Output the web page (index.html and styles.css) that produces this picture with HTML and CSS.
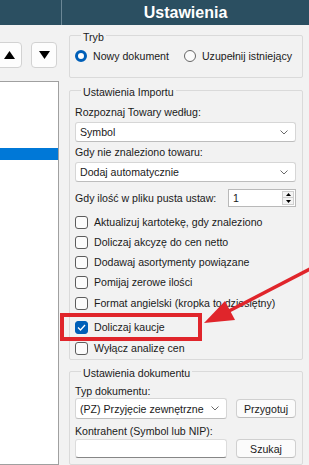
FILE: index.html
```html
<!DOCTYPE html>
<html lang="pl">
<head>
    <meta charset="UTF-8">
    <title>Ustawienia</title>
    <link rel="stylesheet" href="styles.css">
</head>
<body>
    <div class="window">
        <header class="titlebar">
            <div class="titlebar-left"></div>
            <div class="titlebar-title">Ustawienia</div>
        </header>

        <div class="content">
            <aside class="sidebar">
                <div class="order-buttons">
                    <button class="order-btn">
                        <svg width="11" height="8" viewBox="0 0 11 8"><polygon points="5.5,0 11,8 0,8" fill="#000"/></svg>
                    </button>
                    <button class="order-btn">
                        <svg width="11" height="8" viewBox="0 0 11 8"><polygon points="0,0 11,0 5.5,8" fill="#000"/></svg>
                    </button>
                </div>
                <div class="item-list">
                    <div class="list-row selected"></div>
                </div>
            </aside>

            <main class="settings">
                <section class="group group-mode">
                    <div class="group-title">Tryb</div>
                    <div class="radio-row">
                        <label class="radio checked"><span class="radio-dot"></span>Nowy dokument</label>
                        <label class="radio"><span class="radio-dot"></span>Uzupełnij istniejący</label>
                    </div>
                </section>

                <section class="group group-import">
                    <div class="group-title">Ustawienia Importu</div>

                    <div class="field-label">Rozpoznaj Towary według:</div>
                    <div class="select">
                        <span>Symbol</span>
                        <svg class="chevron" width="8" height="5" viewBox="0 0 8 5"><polyline points="0.5,0.5 4,4 7.5,0.5" fill="none" stroke="#6a6a6a" stroke-width="1"/></svg>
                    </div>

                    <div class="field-label">Gdy nie znaleziono towaru:</div>
                    <div class="select">
                        <span>Dodaj automatycznie</span>
                        <svg class="chevron" width="8" height="5" viewBox="0 0 8 5"><polyline points="0.5,0.5 4,4 7.5,0.5" fill="none" stroke="#6a6a6a" stroke-width="1"/></svg>
                    </div>

                    <div class="spin-row">
                        <span>Gdy ilość w pliku pusta ustaw:</span>
                        <div class="spin-input">
                            <span>1</span>
                            <div class="spin-buttons">
                                <div class="spin-btn">
                                    <svg width="5" height="3" viewBox="0 0 5 3"><polygon points="2.5,0 5,3 0,3" fill="#000"/></svg>
                                </div>
                                <div class="spin-btn">
                                    <svg width="5" height="3" viewBox="0 0 5 3"><polygon points="0,0 5,0 2.5,3" fill="#000"/></svg>
                                </div>
                            </div>
                        </div>
                    </div>

                    <div class="check-list">
                        <label class="check"><span class="box"></span>Aktualizuj kartotekę, gdy znaleziono</label>
                        <label class="check"><span class="box"></span>Doliczaj akcyzę do cen netto</label>
                        <label class="check"><span class="box"></span>Dodawaj asortymenty powiązane</label>
                        <label class="check"><span class="box"></span>Pomijaj zerowe ilości</label>
                        <label class="check check-gap-1"><span class="box"></span>Format angielski (kropka to dziesiętny)</label>
                        <label class="check check-gap-4 checked">
                            <span class="box">
                                <svg width="9" height="7" viewBox="0 0 9 7"><polyline points="1,3.5 3.5,6 8,1" fill="none" stroke="#fff" stroke-width="1.3"/></svg>
                            </span>Doliczaj kaucje
                        </label>
                        <label class="check check-gap-1"><span class="box"></span>Wyłącz analizę cen</label>
                    </div>
                </section>

                <section class="group group-document">
                    <div class="group-title">Ustawienia dokumentu</div>

                    <div class="field-label doc-label">Typ dokumentu:</div>
                    <div class="doc-row">
                        <div class="select select-doc">
                            <span>(PZ) Przyjęcie zewnętrzne</span>
                            <svg class="chevron" width="8" height="5" viewBox="0 0 8 5"><polyline points="0.5,0.5 4,4 7.5,0.5" fill="none" stroke="#6a6a6a" stroke-width="1"/></svg>
                        </div>
                        <button class="btn">Przygotuj</button>
                    </div>

                    <div class="field-label doc-label-2">Kontrahent (Symbol lub NIP):</div>
                    <div class="doc-row doc-row-2">
                        <div class="text-input"></div>
                        <button class="btn">Szukaj</button>
                    </div>
                </section>
            </main>
        </div>

        <!-- annotation drawn over the screenshot -->
        <svg class="annotation" width="309" height="465" viewBox="0 0 309 465">
            <rect x="62" y="315" width="138" height="24" fill="none" stroke="#e0252b" stroke-width="4"/>
            <line x1="312" y1="268" x2="229" y2="311" stroke="#e0252b" stroke-width="3.5"/>
            <polygon points="204,323 225,301 235,320" fill="#e0252b"/>
        </svg>
    </div>
</body>
</html>
```

FILE: styles.css
```css
* {
    box-sizing: border-box;
    margin: 0;
    padding: 0;
}

body {
    font-family: 'Liberation Sans', Arial, sans-serif;
    font-size: 10.6px;
    color: #1a1a1a;
    background-color: #f2f2f2;
    width: 309px;
    height: 465px;
    overflow: hidden;
}

.window {
    position: relative;
    width: 309px;
    height: 465px;
    overflow: hidden;
}

/* title bar */
.titlebar {
    display: flex;
    height: 25px;
    background-color: #2b4f61;
}

.titlebar-left {
    width: 62px;
    border-right: 1px solid #6b8796;
}

.titlebar-title {
    flex: 1;
    color: white;
    font-weight: bold;
    font-size: 16px;
    line-height: 25px;
    text-align: center;
}

.content {
    display: flex;
    height: 440px;
}

/* left column */
.sidebar {
    width: 63px;
    margin-left: -4px;
    display: flex;
    flex-direction: column;
    padding-top: 17px;
}

.order-buttons {
    display: flex;
    gap: 9px;
}

.order-btn {
    width: 26px;
    height: 26px;
    background-color: #fdfdfd;
    border: 1px solid #d2d2d2;
    border-radius: 4px;
    display: flex;
    align-items: center;
    justify-content: center;
}

.item-list {
    flex: 1;
    margin-top: 13px;
    background-color: white;
    border: 1px solid #a0a0a0;
}

.list-row {
    height: 12px;
}

.list-row.selected {
    margin-top: 66px;
    background-color: #0078d7;
}

/* right column */
.settings {
    flex: 1;
    min-width: 0;
    padding: 10px 6px 0 10px;
}

.group {
    border: 1px solid #dadada;
    border-radius: 2px;
    padding: 0 6px 0 5px;
}

.group-title {
    width: fit-content;
    margin: -5px 0 0 6px;
    padding: 0 2px;
    line-height: 13px;
    background-color: #f2f2f2;
}

.group-mode {
    padding-bottom: 14px;
}

.radio-row {
    display: flex;
    gap: 15px;
    margin-top: 5px;
    height: 14px;
}

.radio {
    display: flex;
    align-items: center;
    gap: 6px;
    line-height: 14px;
    white-space: nowrap;
}

.radio-dot {
    flex-shrink: 0;
    width: 12px;
    height: 12px;
    border-radius: 50%;
    border: 1px solid #666;
    background-color: #fbfbfb;
}

.radio.checked .radio-dot {
    border: 3.5px solid #005fb8;
    background-color: white;
}

.group-import {
    margin-top: 12px;
    padding-bottom: 1px;
}

.field-label {
    line-height: 13px;
    margin-top: 4px;
}

.group-import .field-label:nth-of-type(2) {
    margin-top: 7px;
}

.select {
    display: flex;
    align-items: center;
    justify-content: space-between;
    height: 20px;
    margin-top: 3px;
    padding: 0 7px 0 4px;
    background-color: white;
    border: 1px solid #d6d6d6;
    border-bottom-color: #bdbdbd;
    border-radius: 3px;
    white-space: nowrap;
}

.spin-row {
    display: flex;
    align-items: center;
    justify-content: space-between;
    margin-top: 7px;
}

.spin-input {
    display: flex;
    align-items: center;
    justify-content: space-between;
    width: 68px;
    height: 18px;
    padding: 0 1px 0 4px;
    background-color: white;
    border: 1px solid #b9b9b9;
}

.spin-buttons {
    display: flex;
    flex-direction: column;
    width: 12px;
}

.spin-btn {
    height: 7px;
    display: flex;
    align-items: center;
    justify-content: center;
    background-color: #f4f4f4;
    border: 1px solid #cfcfcf;
}

.spin-btn + .spin-btn {
    border-top: none;
}

.check-list {
    display: flex;
    flex-direction: column;
    margin-top: 5px;
}

.check {
    display: flex;
    align-items: center;
    gap: 6px;
    height: 20px;
    white-space: nowrap;
}

.check-gap-1 {
    margin-top: 1px;
}

.check-gap-4 {
    margin-top: 4px;
}

.box {
    flex-shrink: 0;
    width: 13px;
    height: 13px;
    border: 1px solid #5c5c5c;
    border-radius: 3px;
    background-color: #fbfbfb;
    display: flex;
    align-items: center;
    justify-content: center;
}

.check.checked .box {
    border-color: #005fb8;
    background-color: #005fb8;
}

.group-document {
    margin-top: 11px;
    padding-bottom: 6px;
}

.doc-label {
    margin-top: 5px;
}

.doc-label-2 {
    margin-top: 6px;
}

.doc-row {
    display: flex;
    align-items: center;
    gap: 9px;
}

.doc-row-2 {
    margin-top: 1px;
}

.select-doc {
    width: 152px;
    height: 21px;
    margin-top: 0;
}

.btn {
    width: 60px;
    height: 19px;
    font-family: inherit;
    font-size: 10.6px;
    color: #1a1a1a;
    background-color: #fbfbfb;
    border: 1px solid #d0d0d0;
    border-bottom-color: #bcbcbc;
    border-radius: 4px;
}

.text-input {
    width: 152px;
    height: 19px;
    background-color: white;
    border: 1px solid #dcdcdc;
    border-bottom-color: #868686;
    border-radius: 3px;
}

/* red annotation */
.annotation {
    position: absolute;
    top: 0;
    left: 0;
    pointer-events: none;
}
```
